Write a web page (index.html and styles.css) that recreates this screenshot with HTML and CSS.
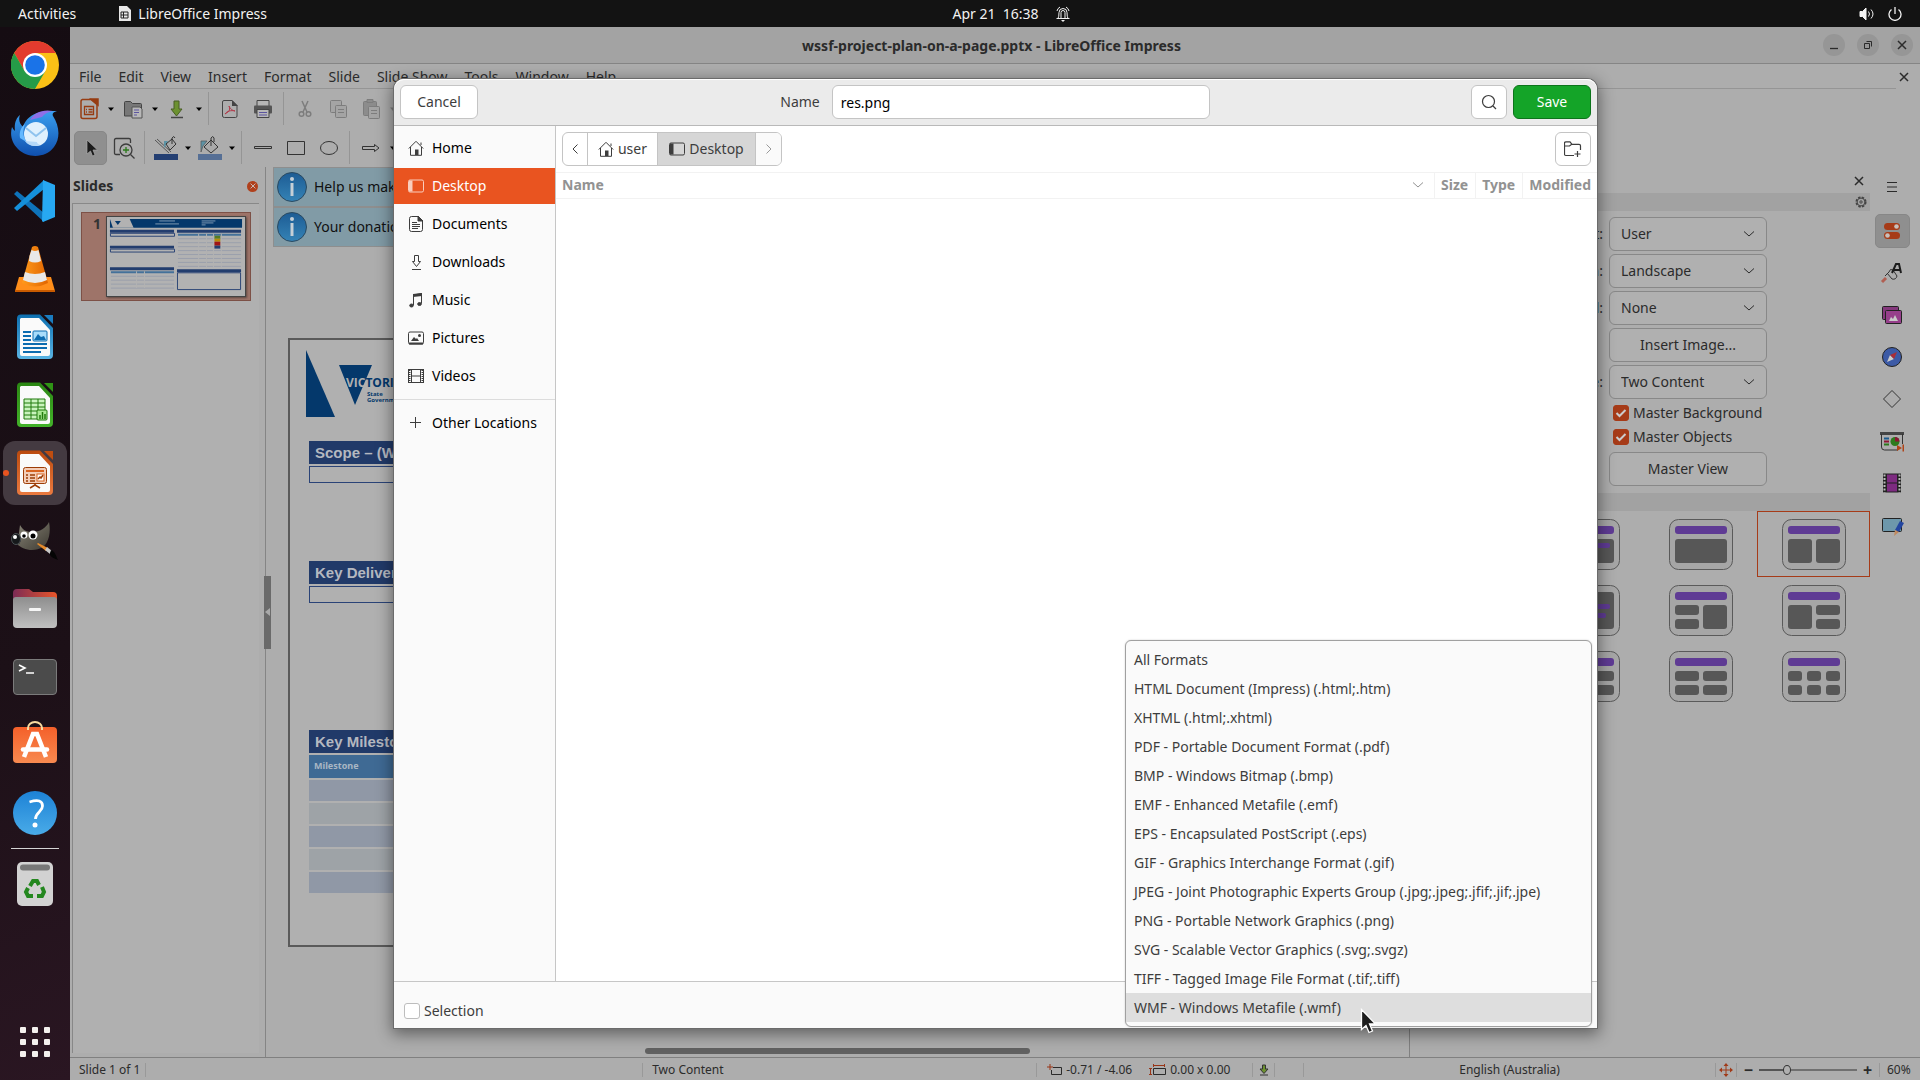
FILE: index.html
```html
<!DOCTYPE html>
<html lang="en">
<head>
<meta charset="utf-8">
<title>wssf-project-plan-on-a-page.pptx - LibreOffice Impress</title>
<link rel="stylesheet" href="styles.css">
</head>
<body>
<svg class="defs" aria-hidden="true">
  <defs>
    <linearGradient id="g-tb" x1="0" y1="0" x2="0" y2="1"><stop offset="0" stop-color="#3aa0f0"/><stop offset="1" stop-color="#0f4fae"/></linearGradient>
    <linearGradient id="g-cone" x1="0" y1="0" x2="1" y2="0"><stop offset="0" stop-color="#ff9a1c"/><stop offset="1" stop-color="#e06500"/></linearGradient>
    <linearGradient id="g-writer" x1="0" y1="0" x2="0" y2="1"><stop offset="0" stop-color="#0d6fb0"/><stop offset="1" stop-color="#5ab4e4"/></linearGradient>
    <linearGradient id="g-calc" x1="0" y1="0" x2="0" y2="1"><stop offset="0" stop-color="#2b8713"/><stop offset="1" stop-color="#43b32a"/></linearGradient>
    <linearGradient id="g-impress" x1="0" y1="0" x2="0" y2="1"><stop offset="0" stop-color="#bb4a0e"/><stop offset="1" stop-color="#ea7a40"/></linearGradient>
    <linearGradient id="g-files" x1="0" y1="0" x2="1" y2="0"><stop offset="0" stop-color="#7c2b55"/><stop offset="1" stop-color="#e9562a"/></linearGradient>
    <linearGradient id="g-grey" x1="0" y1="0" x2="0" y2="1"><stop offset="0" stop-color="#8e8e8e"/><stop offset="1" stop-color="#c0c0c0"/></linearGradient>
    <linearGradient id="g-help" x1="0" y1="0" x2="0" y2="1"><stop offset="0" stop-color="#1d82d6"/><stop offset="1" stop-color="#49abe8"/></linearGradient>
    <linearGradient id="g-info" x1="0" y1="0" x2="0" y2="1"><stop offset="0" stop-color="#1d5c94"/><stop offset="1" stop-color="#3583b6"/></linearGradient>
    <linearGradient id="g-bag" x1="0" y1="0" x2="0" y2="1"><stop offset="0" stop-color="#f4602a"/><stop offset="1" stop-color="#f88a50"/></linearGradient>
    <linearGradient id="g-gimp" x1="0" y1="0" x2="1" y2="1"><stop offset="0" stop-color="#8a8678"/><stop offset="1" stop-color="#3d3a32"/></linearGradient>
  </defs>
  <symbol id="home" viewBox="0 0 16 16"><path d="M.8 8.5 8 1.3l7.2 7.2M2.5 7v8.3h11V7M13 5V2.5" fill="none" stroke="currentColor"/><path d="M7 9.5h3.5V15H7z" fill="currentColor"/></symbol>
  <symbol id="desk" viewBox="0 0 16 16"><rect x=".5" y="2" width="15" height="12" rx="1.5" fill="none" stroke="currentColor"/><path d="M1 2.5h3.5v11H1z" fill="currentColor"/></symbol>
  <symbol id="caret" viewBox="0 0 8 8"><path d="M1 2.5h6L4 6z" fill="currentColor"/></symbol>
  <symbol id="close" viewBox="0 0 10 10"><path d="m1 1 8 8M9 1 1 9" stroke="currentColor" stroke-width="1.5"/></symbol>
  <symbol id="info" viewBox="0 0 30 30"><circle cx="15" cy="15" r="14.5" fill="url(#g-info)" stroke="#2b4a61"/><circle cx="15" cy="7" r="2" fill="#c5cfd6"/><path d="M13.5 11h3v13h-3z" fill="#c5cfd6"/></symbol>
</svg>

<header class="topbar">
  <div class="topbar-left"><span>Activities</span>
    <span class="app-name"><svg width="13" height="16" viewBox="0 0 13 16"><path d="M1 0h8l4 4v11H1z" fill="#e8e8e8"/><path d="M3 6h7v6H3zM3 9h7M5.5 6v6" fill="none" stroke="#222"/></svg>LibreOffice Impress</span></div>
  <div class="clock"><span>Apr 21&nbsp; 16:38</span><svg width="14" height="16" viewBox="0 0 14 16" fill="none" stroke="#f2f2f2"><path d="M.5 12.5h13M2 12.5q1-1.500 1-6a4 4 0 0 1 8 0q0 4.500 1 6M5 12V6.500a2 2 0 0 1 4 0V12M1 5A6 6 0 0 1 4 1M13 5A6 6 0 0 0 10 1"/><path d="M5 14h4l-2 2z" fill="#f2f2f2" stroke="none"/></svg></div>
  <div class="tray"><svg width="16" height="14" viewBox="0 0 16 14" fill="none" stroke="#f2f2f2"><path d="M1 4.5h2.500L7 1v12L3.500 9.500H1z" fill="#f2f2f2"/><path d="M9.500 4.500q2 2.500 0 5M12 2.500q4 4.500 0 9"/></svg><svg width="14" height="14" viewBox="0 0 14 14" fill="none" stroke="#f2f2f2" stroke-width="1.300"><path d="M3.500 2.500a6 6 0 1 0 7 0M7 0v7"/></svg></div>
</header>

<div class="desktop">
<nav class="dock" aria-label="Dock">
  <a href="#" class="dock-item" aria-label="Chrome"><svg viewBox="0 0 48 48"><circle cx="24" cy="24" r="24" fill="#fbc116"/><path d="M3.200 12A24 24 0 0 1 44.800 12H24L13.600 30z" fill="#e33b2e"/><path d="M3.200 12A24 24 0 0 0 24 48L34.400 30 24 34 13.600 30z" fill="#259b48"/><circle cx="24" cy="24" r="12" fill="#fff"/><circle cx="24" cy="24" r="9.800" fill="#1a73e8"/></svg></a>
  <a href="#" class="dock-item" aria-label="Thunderbird"><svg viewBox="0 0 48 48"><path d="M9 6c-2 5 0 9 3 12C15 8 24 1 46 2c-4 1-5 3-4 5 6 9 8 22 1 31-8 11-26 12-36 2C0 33-1 25 1 18c1 2 2 3 3 4C3 15 5 9 9 6z" fill="url(#g-tb)"/><path d="M19 11C23 4 31 0 42 2c-5 1-9 3-11 6z" fill="#8f6fe8"/><path d="M14 15c-3 8-2 14 3 19l-8-5c-1-6 1-11 5-14z" fill="#63b8ff"/><circle cx="25" cy="25" r="12" fill="#dff0fd"/><path d="m15 19 10 8 10-8" fill="none" stroke="#8fc3ee" stroke-width="2"/><path d="M14 32c3 5 10 6 15 4-3-1-3-3-3-3z" fill="#b4d8f8"/></svg></a>
  <a href="#" class="dock-item" aria-label="Visual Studio Code"><svg viewBox="0 0 48 48"><path d="m3 17 3-3 27 22v9z" fill="#0e73ba"/><path d="m3 31 3 3L33 12V3z" fill="#1590da"/><path d="m32 3 12 5v32l-12 5-1-1z" fill="#27a8f2"/></svg></a>
  <a href="#" class="dock-item" aria-label="VLC"><svg viewBox="0 0 48 48"><path d="M8 32h32l4 14H4z" fill="#ff8e1a"/><path d="M4 45h40v2H4z" fill="#c95b00"/><path d="M21 2q3-2 6 0l10 36q-13 7-26 0z" fill="url(#g-cone)"/><path d="m18.500 11 2-6q3.500 2 7 0l2.500 11q-6 3-12 0zM14 27q10 4 20 0l2 8q-12 6-24 0z" fill="#e8e8e8"/></svg></a>
  <a href="#" class="dock-item" aria-label="Writer"><svg viewBox="0 0 48 48"><path d="M10 1.500h19L42 15v27a4 4 0 0 1-4 4H10a4 4 0 0 1-4-4V5.500a4 4 0 0 1 4-4z" fill="url(#g-writer)"/><path d="M10 5h18l11 12v24q0 2-2 2H11q-2 0-2-2V6z" fill="#fafafa"/><path d="M33 2h9v9z" fill="#1a7cc0"/><path d="M12 19h8M12 23h8M12 27h8M12 31h24M12 35h24M12 39h18" stroke="#0d6cb0" stroke-width="2"/><rect x="22" y="18" width="14" height="10" rx="1" fill="#a8dcfa" stroke="#0d6cb0"/><path d="m23 27 4-6 3 3 3-1 2 4z" fill="#0d6cb0"/></svg></a>
  <a href="#" class="dock-item" aria-label="Calc"><svg viewBox="0 0 48 48"><path d="M10 1.500h19L42 15v27a4 4 0 0 1-4 4H10a4 4 0 0 1-4-4V5.500a4 4 0 0 1 4-4z" fill="url(#g-calc)"/><path d="M10 5h18l11 12v24q0 2-2 2H11q-2 0-2-2V6z" fill="#fafafa"/><path d="M33 2h9v9z" fill="#2f9415"/><path d="M13 18h21v20H13zM13 22h21M13 26h21M13 30h21M13 34h21M20 18v20M27 18v20" fill="#c9f3bd" stroke="#217a0c"/><rect x="26" y="29" width="10" height="10" rx="1" fill="#a9e892" stroke="#217a0c"/><path d="M29 38v-4M31.500 38v-7M34 38v-5" stroke="#217a0c" stroke-width="1.500"/></svg></a>
  <a href="#" class="dock-item active" aria-label="Impress"><svg viewBox="0 0 48 48"><path d="M10 1.500h19L42 15v27a4 4 0 0 1-4 4H10a4 4 0 0 1-4-4V5.500a4 4 0 0 1 4-4z" fill="url(#g-impress)"/><path d="M10 5h18l11 12v24q0 2-2 2H11q-2 0-2-2V6z" fill="#fafafa"/><path d="M33 2h9v9z" fill="#bf4d10"/><rect x="12.500" y="18.500" width="23" height="16" rx="2" fill="#f3cdb8" stroke="#9c3c06"/><path d="M15 22h18" stroke="#d8621f" stroke-width="2"/><path d="M15 26h2M15 29h2M15 32h2M19 26h5M19 29h5M19 32h5" stroke="#9c3c06" stroke-width="1.500"/><rect x="26" y="25" width="7" height="7" fill="#fff" stroke="#d8621f"/><path d="m27 30 2-2 1 1 2-3M24 35v1l-5 3M24 36l5 3" fill="none" stroke="#9c3c06" stroke-width="1.500"/></svg></a>
  <a href="#" class="dock-item" aria-label="GIMP"><svg viewBox="0 -3 48 48"><path d="M9 5c3 5 6 7 12 7 8 0 14-4 17-10 2 10 0 20-6 25-8 5-20 4-27-4 2-2 3-10 4-18z" fill="url(#g-gimp)"/><ellipse cx="5" cy="19" rx="5" ry="6" fill="#16191b"/><ellipse cx="5" cy="19" rx="4.500" ry="5.500" fill="none" stroke="#4a5054"/><circle cx="4" cy="17" r="2" fill="#fff"/><circle cx="13" cy="15" r="3.500" fill="#fff"/><circle cx="22" cy="15" r="4.500" fill="#fff"/><circle cx="13" cy="16" r="1.800"/><circle cx="22" cy="16" r="2.500"/><path d="m27 23 10 5-2 3-9-7z" fill="#e58a2b"/><path d="m36 27 5 4-2 3-5-4z" fill="#c8c8c8"/><path d="M40 30c4 1 5 6 7 10-5-2-9-4-8-7z" fill="#050505"/></svg></a>
  <a href="#" class="dock-item" aria-label="Files"><svg viewBox="0 2 48 48"><path d="M2 10q0-4 4-4h12l4 3h20q4 0 4 4v10H2z" fill="url(#g-files)"/><path d="M2 17q0-3 3-3h38q3 0 3 3v24q0 4-4 4H6q-4 0-4-4z" fill="url(#g-grey)"/><rect x="18" y="25" width="12" height="3" rx="1" fill="#f5f5f5"/></svg></a>
  <a href="#" class="dock-item" aria-label="Terminal"><svg viewBox="0 0 48 48"><rect x="2.500" y="6.500" width="43" height="35" rx="3.500" fill="#4b4b4b" stroke="#7b7b7b"/><path d="m8 12 6 3-6 3M15 20h8" fill="none" stroke="#fff" stroke-width="1.600"/></svg></a>
  <a href="#" class="dock-item" aria-label="Ubuntu Software"><svg viewBox="0 0 48 48"><rect x="2" y="6" width="44" height="36" rx="4" fill="url(#g-bag)"/><path d="M17 9V7a7 6 0 0 1 14 0v2" fill="none" stroke="#f9dba0" stroke-width="2"/><path d="m13 36 9-23h4l9 23" fill="none" stroke="#fff" stroke-width="4.500"/><path d="M12 28.500h24" stroke="#fff" stroke-width="4.500" stroke-linecap="round"/></svg></a>
  <a href="#" class="dock-item" aria-label="Help"><svg viewBox="0 0 48 48"><circle cx="24" cy="24" r="22" fill="url(#g-help)"/><path d="M18.500 13q13-4 13 4c0 6-7 6-7 13" fill="none" stroke="#fff" stroke-width="2.800"/><circle cx="24" cy="36" r="2.500" fill="#fff"/></svg></a>
  <span class="dock-rule"></span>
  <a href="#" class="dock-item" aria-label="Trash"><svg viewBox="0 0 48 48"><rect x="6" y="2" width="36" height="44" rx="5" fill="#d2d2d2"/><rect x="9" y="4.500" width="30" height="6" rx="3" fill="#777"/><g fill="none" stroke="#24871f" stroke-width="4"><path d="m19 26 3-5h4l2 4"/><path d="m31 27 2 5-2 4h-5"/><path d="M22 36h-5l-2-4 2-4"/></g></svg></a>
  <a href="#" class="dock-item apps" aria-label="Show Applications"><svg viewBox="0 0 48 48" fill="#f4f1ee"><rect x="9" y="9" width="6" height="6" rx="1"/><rect x="21" y="9" width="6" height="6" rx="1"/><rect x="33" y="9" width="6" height="6" rx="1"/><rect x="9" y="21" width="6" height="6" rx="1"/><rect x="21" y="21" width="6" height="6" rx="1"/><rect x="33" y="21" width="6" height="6" rx="1"/><rect x="9" y="33" width="6" height="6" rx="1"/><rect x="21" y="33" width="6" height="6" rx="1"/><rect x="33" y="33" width="6" height="6" rx="1"/></svg></a>
</nav>

<main class="window">
  <div class="titlebar"><span class="tb-side"></span><h1>wssf-project-plan-on-a-page.pptx - LibreOffice Impress</h1>
    <div class="tb-side controls">
      <button aria-label="Minimize"><svg width="10" height="10" viewBox="0 0 10 10"><path d="M1 8.500h8" stroke="currentColor" stroke-width="1.300"/></svg></button>
      <button aria-label="Restore"><svg width="10" height="10" viewBox="0 0 10 10"><path d="M1.500 3.500h5v5h-5zM3.500 1.500h5v5" fill="none" stroke="currentColor"/></svg></button>
      <button aria-label="Close"><svg width="10" height="10"><use href="#close"/></svg></button>
    </div></div>
  <div class="menubar"><nav><a href="#">File</a><a href="#">Edit</a><a href="#">View</a><a href="#">Insert</a><a href="#">Format</a><a href="#">Slide</a><a href="#">Slide Show</a><a href="#">Tools</a><a href="#">Window</a><a href="#">Help</a></nav><button class="bare" aria-label="Close document"><svg width="10" height="10"><use href="#close"/></svg></button></div>

  <div class="toolbar">
    <button class="tool" aria-label="New"><svg width="20" height="22" viewBox="0 0 20 22" fill="none" stroke="#973c12" stroke-width="1.500"><path d="M3 1.500h9l6 5v12q0 2-2 2H4q-2 0-2-2v-15q0-2 2-2z"/><path d="M12 1h7v6z" fill="#973c12"/><path d="M5.500 8.500h9v8h-9zM7 11.500h1M9.500 11.500h4M7 14h1M9.500 14h4" stroke-width="1.300"/></svg></button><button class="drop" aria-label="New options"><svg><use href="#caret"/></svg></button>
    <button class="tool" aria-label="Open"><svg width="20" height="20" viewBox="0 0 20 20"><path d="M1.500 3.500q0-1 1-1h5l2 2h8q1 0 1 1V17h-17z" fill="#777" stroke="#444"/><path d="M9 8h8l2 2v9H9z" fill="#b8b8b8" stroke="#555"/><path d="M11 11h5M11 13.500h5M11 16h3" stroke="#5c55a0"/></svg></button><button class="drop" aria-label="Open options"><svg><use href="#caret"/></svg></button>
    <button class="tool" aria-label="Save"><svg width="18" height="20" viewBox="0 0 18 20"><path d="M6 2h5v8h3l-5.500 7L3 10h3z" fill="#6c9130" stroke="#485f24"/><path d="M3 18.500h12" stroke="#444" stroke-width="1.500"/></svg></button><button class="drop" aria-label="Save options"><svg><use href="#caret"/></svg></button>
    <span class="sep"></span>
    <button class="tool" aria-label="Export as PDF"><svg width="18" height="20" viewBox="0 0 18 20" fill="none"><path d="M3 1.500h8l5 5V17q0 1.500-1.500 1.500h-11Q1.500 18.500 1.500 17V3Q1.500 1.500 3 1.500z" stroke="#444"/><path d="M11 1v6h6z" fill="#444"/><path d="M8 7c2 5-1 6-4 8 2-3 6-4 10-3-4-1-5-3-6-5" stroke="#b23a4a"/></svg></button>
    <button class="tool" aria-label="Print"><svg width="20" height="20" viewBox="0 0 20 20"><path d="M4 1.500h12V8H4z" fill="#b5b5b5" stroke="#444"/><rect x="1" y="6.500" width="18" height="8" rx="1" fill="#555"/><path d="M4 10.500h12v8H4z" fill="#b8b8b8" stroke="#444"/><path d="M6 13.500h8M6 16h8" stroke="#5c55a0"/></svg></button>
    <span class="sep"></span>
    <button class="tool" aria-label="Cut" disabled><svg width="16" height="20" viewBox="0 0 16 20" fill="none" stroke="#7d7d7d" stroke-width="1.500"><path d="m5 2 5 11M11 2 6 13"/><circle cx="4.500" cy="15" r="2.300"/><circle cx="11.500" cy="15" r="2.300"/></svg></button>
    <button class="tool" aria-label="Copy" disabled><svg width="18" height="20" viewBox="0 0 18 20" fill="#a4a4a4" stroke="#7d7d7d"><rect x="1.500" y="1.500" width="11" height="12" rx="1"/><rect x="6.500" y="6.500" width="11" height="12" rx="1"/><path d="M9 10.500h6M9 13.500h6"/></svg></button>
    <button class="tool" aria-label="Paste" disabled><svg width="18" height="20" viewBox="0 0 18 20" fill="#8c8c8c" stroke="#7d7d7d"><rect x="1.500" y="2.500" width="13" height="14" rx="1"/><path d="M5 .500h6v3H5z"/><rect x="6.500" y="7.500" width="11" height="12" rx="1" fill="#a4a4a4"/><path d="M9 11.500h6M9 14.500h6"/></svg></button><button class="drop" aria-label="Paste options" disabled><svg><use href="#caret"/></svg></button>
  </div>
  <div class="toolbar drawing">
    <button class="tool pressed" aria-label="Select"><svg width="20" height="22" viewBox="0 0 20 22"><path d="M6 3v14l3.500-3 2 5 2.500-1-2-5h4.500z" fill="#1b1b1b" stroke="#aaa" stroke-width=".7"/></svg></button>
    <button class="tool" aria-label="Zoom"><svg width="22" height="22" viewBox="0 0 22 22" fill="none" stroke="#3c3c3c" stroke-width="1.300"><path d="M7 17.500H3q-1.500 0-1.500-1.500V3q0-1.500 1.500-1.500h13q1.500 0 1.500 1.500v3"/><circle cx="13" cy="13" r="6"/><path d="m17.500 17.500 4 4"/><path d="M13 10v6M10 13h6" stroke="#2a7a1a"/></svg></button>
    <span class="sep"></span>
    <button class="tool" aria-label="Line color"><svg width="24" height="24" viewBox="0 0 24 24"><path d="M1 4 15 17M3 3l14 13" stroke="#555"/><path d="M10 12V5h4l-2 4z" fill="#5d93a5"/><path d="m12 8 6-5 4 5-6 6z" fill="#aaa" stroke="#333"/><path d="M18 8V2q2-3 3 0" fill="none" stroke="#333"/><path d="M0 18h24v6H0z" fill="#243f72"/></svg></button><button class="drop" aria-label="Line color options"><svg><use href="#caret"/></svg></button>
    <button class="tool" aria-label="Fill color"><svg width="24" height="24" viewBox="0 0 24 24"><path d="M3 16V5h6l-4 5z" fill="#5d93a5" stroke="#555" stroke-width=".7"/><path d="m6 11 7-7 7 7-7 6z" fill="#aaa" stroke="#333"/><path d="M13 10V2q2-3 3 0v4" fill="none" stroke="#333"/><path d="M0 18h24v6H0z" fill="#566f95"/></svg></button><button class="drop" aria-label="Fill color options"><svg><use href="#caret"/></svg></button>
    <span class="sep"></span>
    <button class="tool" aria-label="Line"><svg width="18" height="18" viewBox="0 0 18 18"><path d="M.5 7.500h17v2H.5z" fill="#aaa" stroke="#333"/></svg></button>
    <button class="tool" aria-label="Rectangle"><svg width="18" height="18" viewBox="0 0 18 18"><path d="M.5 2.500h17v13H.5z" fill="none" stroke="#333"/></svg></button>
    <button class="tool" aria-label="Ellipse"><svg width="18" height="18" viewBox="0 0 18 18"><ellipse cx="9" cy="9" rx="8.500" ry="6.500" fill="none" stroke="#333"/></svg></button>
    <span class="sep"></span>
    <button class="tool" aria-label="Arrows"><svg width="18" height="18" viewBox="0 0 18 18"><path d="M.5 7.500h12v-2L17 9l-4.500 3.500v-2H.5z" fill="none" stroke="#333"/></svg></button><button class="drop" aria-label="Arrow options"><svg><use href="#caret"/></svg></button>
  </div>

  <div class="workspace">
    <section class="slides">
      <header><h2>Slides</h2><button class="round-close" aria-label="Close slides pane"><svg width="6" height="6"><use href="#close"/></svg></button></header>
      <div class="slide-list">
        <div class="slide-thumb"><span>1</span>
          <svg viewBox="0 0 140 80" preserveAspectRatio="none" aria-label="Slide 1 preview"><path fill="#b2b2b2" d="M0 0h140v80H0z"/><path d="M3 2h134v9H3z" fill="#04386b"/><path d="M3 2h20l4 9H6z" fill="#b2b2b2"/><path d="M8 4h6l-3 4z" fill="#04386b"/><path d="M3 13h65v3H3zM3 29h65v3H3zM3 51h65v3H3zM71 13h65v3H71zM71 53h65v3H71z" fill="#223d6e"/><path d="M3.500 16.500h65v3h-65zM3.500 32.500h65v3h-65zM71.500 56.500h64v17h-64z" fill="none" stroke="#2c4576"/><path d="M4 55h64v2H4zM72 17h64v2H72z" fill="#44719a"/><path d="M4 60h64M4 64h64M4 68h64M4 72h64M72 22h64M72 26h64M72 30h64M72 34h64M72 38h64M72 42h64M72 46h64M72 50h64" stroke="#9aa0ac"/><path d="M109 19h6v3h-6z" fill="#557d24"/><path d="M109 22h6v3h-6z" fill="#b78d08"/><path d="M109 25h6v4h-6z" fill="#a11515"/><path d="M109 29h6v3h-6z" fill="#223d6e"/><path d="M30 55v17M38 55v17M93 17v34M101 17v34M108 17v34M116 17v34" stroke="#b2b2b2"/><path d="M53 4h16M49 7h24M96 4h14M96 6h12M96 8h4" stroke="#7d98b2"/></svg>
        </div>
      </div>
    </section>
    <div class="splitter"><button aria-label="Collapse slides pane"><svg width="5" height="8" viewBox="0 0 5 8"><path d="M5 0v8L0 4z" fill="#aaa"/></svg></button></div>
    <section class="editor">
      <div class="infobar"><svg width="30" height="30"><use href="#info"/></svg>Help us mak</div>
      <div class="infobar"><svg width="30" height="30"><use href="#info"/></svg>Your donatio</div>
      <article class="slide">
        <svg class="logo" width="140" height="68" viewBox="0 0 140 68"><path d="M0 0v67h29z" fill="#04386b"/><path d="M33 15h33L49 55z" fill="#04386b"/><text x="40" y="37" class="logo-name"><tspan fill="#b0b0b0">VIC</tspan><tspan>TORIA</tspan></text><text x="61" y="46" class="logo-sub">State</text><text x="61" y="52" class="logo-sub">Government</text></svg>
        <div class="block scope"><h3>Scope – (What is in scope)</h3><div class="box"></div></div>
        <div class="block deliver"><h3>Key Deliverables</h3><div class="box"></div></div>
        <div class="block"><h3>Key Milestones</h3>
          <table><thead><tr><th>Milestone</th></tr></thead><tbody><tr><td></td></tr><tr><td></td></tr><tr><td></td></tr><tr><td></td></tr><tr><td></td></tr></tbody></table></div>
      </article>
      <div class="hscroll"><span></span></div>
    </section>
    <aside class="deck">
      <div class="deck-title"><button class="bare" aria-label="Close sidebar deck"><svg width="10" height="10"><use href="#close"/></svg></button></div>
      <div class="strip"><svg width="12" height="12" viewBox="0 0 12 12" fill="none" stroke="#444"><circle cx="6" cy="6" r="4.800" stroke-width="1.500" stroke-dasharray="2.500 1.300"/><circle cx="6" cy="6" r="3.900"/><circle cx="6" cy="6" r="1.200"/></svg></div>
      <form class="props">
        <label for="f1">Format:</label><select id="f1"><option>User</option></select>
        <label for="f2">Orientation:</label><select id="f2"><option>Landscape</option></select>
        <label for="f3">Background:</label><select id="f3"><option>None</option></select>
        <button type="button">Insert Image...</button>
        <label for="f4">Master Slide:</label><select id="f4"><option>Two Content</option></select>
        <div class="checks"><label><input type="checkbox" checked>Master Background</label><label><input type="checkbox" checked>Master Objects</label></div>
        <button type="button">Master View</button>
      </form>
      <div class="strip"></div>
      <div class="layouts">
        <i><svg><rect class="f" x=".5" y=".5" width="63" height="50" rx="9"/></svg></i>
        <i><svg><rect class="f" x=".5" y=".5" width="63" height="50" rx="9"/><rect class="p" x="6" y="7" width="52" height="8" rx="3"/><rect class="g" x="6" y="20" width="52" height="24" rx="3"/><rect class="p" x="10" y="24" width="44" height="5" rx="2"/></svg></i>
        <i><svg><rect class="f" x=".5" y=".5" width="63" height="50" rx="9"/><rect class="p" x="6" y="7" width="52" height="8" rx="3"/><rect class="g" x="6" y="20" width="52" height="24" rx="3"/></svg></i>
        <i class="sel"><svg><rect class="f" x=".5" y=".5" width="63" height="50" rx="9"/><rect class="p" x="6" y="7" width="52" height="8" rx="3"/><rect class="g" x="6" y="20" width="24" height="24" rx="3"/><rect class="g" x="34" y="20" width="24" height="24" rx="3"/></svg></i>
        <i><svg><rect class="f" x=".5" y=".5" width="63" height="50" rx="9"/><rect class="p" x="6" y="7" width="52" height="8" rx="3"/></svg></i>
        <i><svg><rect class="f" x=".5" y=".5" width="63" height="50" rx="9"/><rect class="g" x="6" y="7" width="52" height="37" rx="3"/><rect class="p" x="10" y="19" width="44" height="5" rx="2"/><rect class="p" x="14" y="28" width="36" height="5" rx="2"/></svg></i>
        <i><svg><rect class="f" x=".5" y=".5" width="63" height="50" rx="9"/><rect class="p" x="6" y="7" width="52" height="8" rx="3"/><rect class="g" x="6" y="20" width="24" height="10" rx="3"/><rect class="g" x="6" y="34" width="24" height="10" rx="3"/><rect class="g" x="34" y="20" width="24" height="24" rx="3"/></svg></i>
        <i><svg><rect class="f" x=".5" y=".5" width="63" height="50" rx="9"/><rect class="p" x="6" y="7" width="52" height="8" rx="3"/><rect class="g" x="6" y="20" width="24" height="24" rx="3"/><rect class="g" x="34" y="20" width="24" height="10" rx="3"/><rect class="g" x="34" y="34" width="24" height="10" rx="3"/></svg></i>
        <i><svg><rect class="f" x=".5" y=".5" width="63" height="50" rx="9"/><rect class="p" x="6" y="7" width="52" height="8" rx="3"/></svg></i>
        <i><svg><rect class="f" x=".5" y=".5" width="63" height="50" rx="9"/><rect class="p" x="6" y="7" width="52" height="8" rx="3"/><rect class="g" x="6" y="20" width="52" height="10" rx="3"/><rect class="g" x="6" y="34" width="52" height="10" rx="3"/></svg></i>
        <i><svg><rect class="f" x=".5" y=".5" width="63" height="50" rx="9"/><rect class="p" x="6" y="7" width="52" height="8" rx="3"/><rect class="g" x="6" y="20" width="24" height="10" rx="3"/><rect class="g" x="6" y="34" width="24" height="10" rx="3"/><rect class="g" x="34" y="20" width="24" height="10" rx="3"/><rect class="g" x="34" y="34" width="24" height="10" rx="3"/></svg></i>
        <i><svg><rect class="f" x=".5" y=".5" width="63" height="50" rx="9"/><rect class="p" x="6" y="7" width="52" height="8" rx="3"/><rect class="g" x="6" y="20" width="14" height="10" rx="3"/><rect class="g" x="25" y="20" width="14" height="10" rx="3"/><rect class="g" x="44" y="20" width="14" height="10" rx="3"/><rect class="g" x="6" y="34" width="14" height="10" rx="3"/><rect class="g" x="25" y="34" width="14" height="10" rx="3"/><rect class="g" x="44" y="34" width="14" height="10" rx="3"/></svg></i>
      </div>
    </aside>
    <nav class="tabs" aria-label="Sidebar">
      <button class="menu" aria-label="Sidebar settings"><svg width="10" height="10" viewBox="0 0 10 10"><path d="M0 .500h10M0 5h10M0 9.500h10" stroke="#2a2a2a"/></svg></button>
      <button class="on" aria-label="Properties"><svg viewBox="0 0 24 24"><rect x="4" y="4" width="16" height="7" rx="3.500" fill="#a63b18"/><circle cx="16.500" cy="7.500" r="2.300" fill="#c8c0bc"/><rect x="4" y="13" width="16" height="7" rx="3.500" fill="#a63b18"/><circle cx="7.500" cy="16.500" r="2.300" fill="#c8c0bc"/></svg></button>
      <button aria-label="Styles"><svg viewBox="0 0 24 24"><path d="m2 21 4-4" stroke="#b05f52" stroke-width="3"/><path d="m5 15 4-4q1-4 4-2l4 6q-1 4-5 3l-5-6" fill="none" stroke="#333"/><path d="m12 12 4-9h3l2 9M14 9h6" fill="none" stroke="#1c1c1c" stroke-width="2"/></svg></button>
      <button aria-label="Gallery"><svg viewBox="0 0 24 24" stroke="#222"><rect x="2.500" y="3.500" width="16" height="13" rx="1" fill="#84397c"/><rect x="5.500" y="7.500" width="16" height="13" rx="1" fill="#963f8b"/><path d="m9 18 2-4 2 2 2-4 3 6z" fill="#c9c9c9" stroke="none"/></svg></button>
      <button aria-label="Navigator"><svg viewBox="0 0 24 24"><circle cx="12" cy="12" r="9.500" fill="#3c5aa6" stroke="#222"/><path d="m7 17 3-7 4 4z" fill="#ccc"/><path d="m17 7-3 7-4-4z" fill="#a92e38"/></svg></button>
      <button aria-label="Shapes"><svg viewBox="0 0 24 24"><path d="m12 3.500 8.500 8.500-8.500 8.500L3.500 12z" fill="none" stroke="#333"/></svg></button>
      <button aria-label="Slide transition"><svg viewBox="0 0 24 24"><path d="M0 3h24v3H0z" fill="#444"/><path d="M1.500 5v13q0 3 3 3H18M22.500 5v10" fill="none" stroke="#333"/><path d="M4 9.500h5" stroke="#1b5a8e" stroke-width="2"/><path d="M4 12.500h5" stroke="#8e1535" stroke-width="2"/><path d="M4 15.500h5" stroke="#2d7a1e" stroke-width="2"/><circle cx="15" cy="12.500" r="4.500" fill="#2d7a1e"/><path d="M15 8a4.500 4.500 0 0 1 4.500 4.500H15z" fill="#8e1535"/><path d="m17 16 5 3-5 3zM22.500 15.500h1.500v7h-1.500z" fill="#b04419"/></svg></button>
      <button aria-label="Animation"><svg viewBox="0 0 24 24"><path d="M3 2.500h18v19H3z" fill="#222"/><path d="M7 3.500h10v8H7zM7 12.500h10v8H7z" fill="#7d2b80"/><path d="M4.500 3.500v18M19.500 3.500v18" stroke="#bbb" stroke-width="2" stroke-dasharray="2 1.500"/></svg></button>
      <button aria-label="Master slides"><svg viewBox="0 0 24 24"><rect x="2.500" y="5.500" width="19" height="13" rx="1" fill="#6d97ab" stroke="#222"/><path d="m15 17 5-9 4 2-5 9z" fill="#2345a0"/><path d="m15 17 4 2-5 4z" fill="#c08a60"/></svg></button>
    </nav>
  </div>

  <footer class="status">
    <span class="s-page">Slide 1 of 1</span><span class="s-info"></span><span class="s-layout">Two Content</span>
    <span class="s-pos"><svg width="16" height="12" viewBox="0 0 16 12" fill="none"><path d="M6 3.500h8.500v7h-10V6" stroke="#2a2a2a"/><path d="M3 0v6M0 3h6" stroke="#993517"/></svg><b>-0.71 / -4.06</b><svg width="18" height="12" viewBox="0 0 18 12" fill="none"><path d="M4.500 4.500h12v6h-12z" stroke="#2a2a2a"/><path d="M4 1.500h12M4.500 0v3M15.500 0v3M1.500 4v7M0 4.500h3M0 10.500h3" stroke="#993517"/></svg><b>0.00 x 0.00</b></span>
    <span class="s-save"><svg width="10" height="12" viewBox="0 0 10 12"><path d="M3.500 1h3v4H9L5 9.500 1 5h2.500z" fill="#6c9130" stroke="#333"/><path d="M1 11h8" stroke="#333"/></svg></span><span class="s-sign"></span>
    <span class="s-lang">English (Australia)</span>
    <span class="s-fit"><svg width="14" height="14" viewBox="0 0 14 14" fill="#a03a18"><path d="m7 0 2.500 3h-5zM7 14l2.500-3h-5zM0 7l3-2.500v5zM14 7l-3-2.500v5z"/><path d="M7 2v10M2 7h10" stroke="#a03a18"/></svg></span>
    <span class="s-zoom"><button aria-label="Zoom out">−</button><input type="range" aria-label="Zoom" value="27"><button aria-label="Zoom in">+</button></span>
    <span class="s-pct">60%</span>
  </footer>

  <div class="overlay">
    <div class="dialog" role="dialog" aria-label="Export">
      <header class="dlg-head">
        <button class="btn wide">Cancel</button>
        <div class="name"><label for="fname">Name</label><input id="fname" type="text" value="res.png"></div>
        <button class="btn icon" aria-label="Search"><svg width="16" height="16" viewBox="0 0 16 16" fill="none" stroke="currentColor" stroke-width="1.200"><circle cx="7.500" cy="7.500" r="6"/><path d="m12 12 3 3"/></svg></button>
        <button class="btn wide save">Save</button>
      </header>
      <div class="dlg-body">
        <nav class="places">
          <a href="#"><svg><use href="#home"/></svg>Home</a>
          <a href="#" class="current"><svg><use href="#desk"/></svg>Desktop</a>
          <a href="#"><svg viewBox="0 0 16 16" fill="none" stroke="currentColor"><path d="M3.500.5h7l4 4v9q0 2-2 2h-9q-2 0-2-2v-11q0-2 2-2z"/><path d="M10 0v5h5z" fill="currentColor"/><path d="M4 6.500h5M4 8.500h8M4 10.500h8M4 12.500h6"/></svg>Documents</a>
          <a href="#"><svg viewBox="0 0 16 16" fill="none" stroke="currentColor"><path d="M6.500 1.500h4v6h2l-4 5-4-5h2zM4 15.500h9"/></svg>Downloads</a>
          <a href="#"><svg viewBox="0 0 16 16" fill="none" stroke="currentColor"><path d="M5.500 13V3l8-1.500v10"/><path d="M5 2l9-1v3L5 5z" fill="currentColor" stroke="none"/><ellipse cx="3.500" cy="13.500" rx="1.800" ry="1.500" fill="currentColor"/><ellipse cx="11.500" cy="12" rx="1.800" ry="1.500" fill="currentColor"/></svg>Music</a>
          <a href="#"><svg viewBox="0 0 16 16" fill="none" stroke="currentColor"><rect x=".5" y="2" width="15" height="12" rx="1.500"/><path d="M1 13.500h14" stroke-width="2"/><path d="m3 11 3-4 2 2 1-1 2 3z" fill="currentColor" stroke="none"/><circle cx="11.500" cy="5.500" r="1.500" fill="currentColor" stroke="none"/></svg>Pictures</a>
          <a href="#"><svg viewBox="0 0 16 16" fill="none" stroke="currentColor"><path d="M3.500 1.500h9v13h-9zM3.500 8h9"/><path d="M1.500 2v12.500M14.500 2v12.500" stroke-width="2" stroke-dasharray="1 1"/><path d="M1 1.500h14M1 14.500h14M.500 1v14M15.500 1v14"/></svg>Videos</a>
          <hr>
          <a href="#"><svg viewBox="0 0 16 16" stroke="currentColor"><path d="M7.500 2v11M2 7.500h11"/></svg>Other Locations</a>
        </nav>
        <section class="files">
          <div class="path">
            <div class="crumbs"><button aria-label="Back"><svg width="8" height="12" viewBox="0 0 8 12" fill="none" stroke="currentColor"><path d="M6.500 1.500 2 6l4.500 4.500"/></svg></button><button class="c-user"><svg width="16" height="16"><use href="#home"/></svg>user</button><button class="c-desk"><svg width="16" height="16"><use href="#desk"/></svg>Desktop</button><button class="fwd" aria-label="Forward"><svg width="8" height="12" viewBox="0 0 8 12" fill="none" stroke="currentColor"><path d="M1.500 1.500 6 6l-4.500 4.500"/></svg></button></div>
            <button class="btn icon" aria-label="Create Folder"><svg width="18" height="16" viewBox="0 0 18 16" fill="none" stroke="currentColor" stroke-width="1.200"><path d="M10 14.500H2q-1.500 0-1.500-1.500V2Q.5.8 2 .8h4l2 2.500h7q1.500 0 1.500 1.500V9M.5 5h5l2.500-2M13.500 10v6M10.500 13h6"/></svg></button>
          </div>
          <table class="listing"><thead><tr><th class="n"><span>Name<svg width="12" height="8" viewBox="0 0 12 8" fill="none" stroke="currentColor"><path d="m1 1.500 5 4.500 5-4.500"/></svg></span></th><th>Size</th><th>Type</th><th class="m">Modified</th></tr></thead></table>
        </section>
      </div>
      <footer class="dlg-foot"><label><input type="checkbox">Selection</label>
        <ul class="formats" role="listbox" aria-label="File format">
          <li role="option">All Formats</li><li role="option">HTML Document (Impress) (.html;.htm)</li><li role="option">XHTML (.html;.xhtml)</li><li role="option">PDF - Portable Document Format (.pdf)</li><li role="option">BMP - Windows Bitmap (.bmp)</li><li role="option">EMF - Enhanced Metafile (.emf)</li><li role="option">EPS - Encapsulated PostScript (.eps)</li><li role="option">GIF - Graphics Interchange Format (.gif)</li><li role="option">JPEG - Joint Photographic Experts Group (.jpg;.jpeg;.jfif;.jif;.jpe)</li><li role="option">PNG - Portable Network Graphics (.png)</li><li role="option">SVG - Scalable Vector Graphics (.svg;.svgz)</li><li role="option">TIFF - Tagged Image File Format (.tif;.tiff)</li><li role="option" class="hover">WMF - Windows Metafile (.wmf)</li>
        </ul>
        <svg class="pointer" width="18" height="26" viewBox="0 0 18 26"><path d="M1.500 1.500v20l4.500-4 3 7 3.500-1.500-3-7h6z" fill="#1e1e1e" stroke="#fff" stroke-width="1.300"/></svg>
      </footer>
    </div>
  </div>
</main>
</div>
</body>
</html>
```
FILE: styles.css
```css
* { box-sizing: border-box; }
html, body { height: 100%; margin: 0; }
body { display: flex; flex-direction: column; overflow: hidden; font: 14px/20px "Noto Sans", "Open Sans", sans-serif; color: #2b2b2b; background: #adadad; }
button, input, select { font: inherit; color: inherit; }
button { padding: 0; border: 0; background: none; }
a { color: inherit; text-decoration: none; }
svg { display: block; flex: none; }
h1, h2, h3, ul { margin: 0; padding: 0; font-size: inherit; line-height: inherit; }
.defs { position: absolute; width: 0; height: 0; }

.topbar { display: flex; justify-content: space-between; height: 27px; flex: none; background: #131313; color: #f2f2f2; align-items: center; }
.topbar-left, .tray { flex: 1; display: flex; align-items: center; }
.topbar-left { gap: 42px; padding-left: 18px; }
.app-name { display: flex; align-items: center; gap: 7px; }
.clock { display: flex; gap: 17px; align-items: center; padding-left: 102px; }
.tray { justify-content: flex-end; gap: 13px; padding-right: 18px; }

.desktop { flex: 1; display: flex; min-height: 0; }
.dock { width: 70px; flex: none; display: flex; flex-direction: column; align-items: center; gap: 4px; padding: 6px 0; background: linear-gradient(160deg, #150c12 0%, #1c1017 60%, #2a1622 100%); }
.dock-item { width: 64px; height: 64px; display: grid; place-items: center; border-radius: 12px; position: relative; flex: none; }
.dock-item svg { width: 48px; height: 48px; }
.dock-item.active { background: #443a41; }
.dock-item.active::before { content: ""; position: absolute; left: 0; width: 6px; height: 6px; border-radius: 50%; background: #e95420; }
.dock-rule { width: 48px; height: 1px; background: #d5d5d5; margin: -1px 0; }
.apps { margin-top: auto; }

.window { flex: 1; min-width: 0; display: flex; flex-direction: column; position: relative; background: #adadad; }
.titlebar { display: flex; align-items: center; height: 37px; flex: none; background: #a3a3a3; border-bottom: 1px solid #858585; }
.titlebar h1 { white-space: nowrap; font-weight: 700; padding-top: 2px; }
.tb-side { flex: 1; }
.controls { display: flex; justify-content: flex-end; gap: 12px; padding-right: 7px; }
.controls button { width: 22px; height: 22px; border-radius: 50%; background: #969696; display: grid; place-items: center; }
.menubar { display: flex; justify-content: space-between; height: 25px; flex: none; padding-right: 11px; }
.menubar nav { flex: 1; display: flex; gap: 17px; padding: 2px 0 0 9px; margin-right: 3px; border-bottom: 1px solid #959595; align-items: center; }
.bare { display: grid; place-items: center; }
.toolbar { display: flex; align-items: center; height: 39px; flex: none; padding-left: 2px; }
.toolbar.drawing { padding-left: 4px; }
.tool { width: 33px; height: 34px; display: grid; place-items: center; border-radius: 5px; }
.tool.pressed { background: #8f8f8f; border: 1px solid #878787; }
.drop { width: 11px; display: grid; place-items: center; color: #000; }
.drop svg { width: 8px; height: 8px; }
.drop:disabled { color: #7d7d7d; }
.sep { width: 9px; height: 33px; background: linear-gradient(#959595, #959595) center / 1px 100% no-repeat; }

.workspace { flex: 1; display: flex; min-height: 0; border-bottom: 1px solid #808080; }
.slides { width: 194px; flex: none; display: flex; flex-direction: column; }
.slides header { display: flex; justify-content: space-between; align-items: center; height: 36px; padding: 2px 6px 0 3px; }
.slides h2 { font-weight: 700; }
.round-close { width: 11px; height: 11px; border-radius: 50%; background: #b0401c; color: #c9c9c9; display: grid; place-items: center; }
.slide-list { flex: 1; margin: 0 5px 4px 2px; border: solid #888; border-width: 1px 0 0 1px; background: #b0b0b0; padding: 8px; }
.slide-thumb { display: flex; width: 170px; height: 89px; padding: 3px 4px; gap: 5px; background: #9e7469; border: 1px solid #7d5147; font-weight: 700; }
.slide-thumb span { width: 20px; text-align: right; color: #333; line-height: 16px; }
.slide-thumb svg { width: 140px; height: 81px; border: 1px solid #444; box-shadow: 1px 1px 2px #5a4540; }
.splitter { width: 9px; flex: none; display: flex; align-items: center; background: linear-gradient(#858585, #858585) 1px 0 / 1px 100% no-repeat; }
.splitter button { width: 7px; height: 73px; background: #6a6a6a; display: grid; place-items: center; }
.editor { flex: 1; min-width: 0; display: flex; flex-direction: column; }
.infobar { display: flex; align-items: center; gap: 7px; height: 40px; flex: none; padding-left: 3px; background: #819ba6; border: 1px solid #8e8e8e; color: #101010; }
.slide { flex: 1; min-height: 0; margin: 91px 60px 98px 15px; padding: 10px 16px; border: 2px solid #5a5a5a; background: #b0b0b0; }
.logo text { fill: #04386b; font: 700 12px "Open Sans", sans-serif; }
.logo .logo-sub { font-size: 6px; }
.block { padding-left: 3px; font-family: "Liberation Sans", sans-serif; }
.scope { margin-top: 23px; height: 120px; }
.deliver { height: 169px; }
.block h3 { height: 23px; padding-left: 6px; font: 700 15px/24px "Liberation Sans", sans-serif; background: #213a69; color: #b4b8c0; margin-bottom: 2px; }
.box { height: 17px; border: 1px solid #2a4377; }
.block table { width: 100%; border-spacing: 0; border-collapse: collapse; }
.block th { height: 24px; padding: 0 0 2px 5px; text-align: left; font: 700 9px/12px "Noto Sans", sans-serif; color: #a9b7c4; background: #3f6a94; border-bottom: 2px solid #b0b0b0; }
.block td { height: 23px; padding: 0; background: #9098a6; border-bottom: 2px solid #b0b0b0; }
.block tr:nth-child(even) td { background: #9ea3a7; }
.hscroll { height: 12px; flex: none; display: flex; align-items: center; padding-left: 372px; }
.hscroll span { width: 385px; height: 6px; border-radius: 3px; background: #616161; }

.deck { width: 461px; flex: none; border-left: 1px solid #808080; }
.deck-title { height: 26px; display: flex; justify-content: flex-end; padding: 2px 6px 0; }
.strip { height: 18px; display: flex; justify-content: flex-end; align-items: center; padding-right: 3px; background: #a2a2a2; }
.props { display: grid; grid-template-columns: 1fr 158px; gap: 3px 6px; padding: 6px 103px 7px 0; }
.props > label { text-align: right; align-self: center; }
.props select, .props button { grid-column: 2; height: 34px; border: 1px solid #888; border-radius: 6px; background: #b0b0b0; }
.props select { appearance: none; padding: 0 11px; background: #b0b0b0 url("data:image/svg+xml,%3Csvg xmlns='http://www.w3.org/2000/svg' width='12' height='8' fill='none' stroke='%232b2b2b'%3E%3Cpath d='m1 1.500 5 4.500 5-4.500'/%3E%3C/svg%3E") right 11px center no-repeat; }
.checks { grid-column: 2; margin-top: -1px; }
.checks label { display: flex; align-items: center; gap: 4px; height: 24px; padding-left: 4px; white-space: nowrap; }
input[type="checkbox"] { appearance: none; width: 16px; height: 16px; margin: 0; flex: none; border: 1px solid #bdbdbd; border-radius: 3px; background: #fff; }
.checks input:checked { border-color: #a63b18; background: #a63b18 url("data:image/svg+xml,%3Csvg xmlns='http://www.w3.org/2000/svg' width='14' height='14' fill='none' stroke='%23ccc' stroke-width='2'%3E%3Cpath d='m2.500 7 3 3 6-6'/%3E%3C/svg%3E") center no-repeat; }
.layouts { display: grid; grid-template-columns: repeat(4, 1fr); grid-auto-rows: 66px; padding-left: 8px; }
.layouts i { display: grid; place-items: center; }
.layouts .sel { border: 1px solid #a63b18; }
.layouts svg { width: 64px; height: 51px; }
.f { fill: #a6a6a6; stroke: #5a5a5a; }
.p { fill: #5f3b94; }
.g { fill: #575757; }
.tabs { width: 50px; flex: none; display: flex; flex-direction: column; align-items: center; gap: 8px; padding-right: 6px; }
.tabs button { width: 35px; height: 34px; flex: none; display: grid; place-items: center; border-radius: 5px; }
.tabs button svg { width: 24px; height: 24px; }
.tabs .menu { height: 39px; }
.tabs .menu svg { width: 10px; height: 10px; }
.tabs .on { background: #8f8f8f; border: 1px solid #878787; }

.status { display: flex; align-items: center; height: 22px; flex: none; padding-top: 2px; font-size: 12px; }
.status > span { display: flex; align-items: center; height: 14px; white-space: nowrap; border-right: 1px solid #999; }
.status b { font-weight: 400; }
.status .s-page { width: 76px; padding-left: 9px; }
.status .s-info { flex: 500 1 0; }
.status .s-layout { flex: 387 1 0; padding-left: 9px; }
.status .s-pos { width: 215px; gap: 3px; padding-left: 10px; border: 0; }
.s-pos b:first-of-type { width: 80px; }
.status .s-save { width: 23px; justify-content: center; border-left: 1px solid #999; }
.status .s-sign { width: 29px; }
.status .s-lang { flex: 414 1 0; justify-content: center; }
.status .s-fit { width: 21px; justify-content: center; }
.status .s-zoom { width: 143px; justify-content: center; gap: 5px; }
.s-zoom button { font-weight: 700; font-size: 16px; line-height: 14px; width: 11px; }
.s-zoom input { appearance: none; width: 98px; height: 2px; margin: 0; background: linear-gradient(90deg, #555 28%, #707070 28%); }
.s-zoom input::-webkit-slider-thumb { appearance: none; width: 8px; height: 10px; border: 1px solid #333; border-radius: 50%; background: #b0b0b0; }
.status .s-pct { width: 40px; padding-left: 7px; border: 0; }

.overlay { position: absolute; inset: 0; padding: 52px 323px 52px 324px; display: flex; }
.dialog { flex: 1; display: flex; flex-direction: column; background: #fafafa; border-radius: 10px 10px 0 0; box-shadow: 0 0 0 1px #6b6b6b, 0 4px 16px 2px rgba(0, 0, 0, .45); color: #3d3d3d; }
.dlg-head { display: flex; align-items: center; gap: 6px; height: 47px; flex: none; padding: 0 6px; border-radius: 10px 10px 0 0; background: #ebebeb; border-bottom: 1px solid #b9b9b9; box-shadow: inset 0 1px #fff; }
.btn { height: 34px; border: 1px solid #c4c4c4; border-radius: 6px; background: #fff; display: grid; place-items: center; }
.btn.wide { width: 78px; }
.btn.icon { width: 36px; }
.btn.save { color: #fff; background: #14a428; border-color: #0c741b; }
.name { flex: 1; display: flex; justify-content: center; align-items: center; gap: 12px; padding-left: 41px; }
.name input { width: 378px; height: 34px; padding: 0 8px; border: 1px solid #c4c4c4; border-radius: 6px; background: #fff; color: #000; }
.dlg-body { flex: 1; display: flex; min-height: 0; }
.places { width: 162px; flex: none; display: flex; flex-direction: column; gap: 2px; padding-top: 4px; border-right: 1px solid #c6c6c6; color: #000; }
.places a { display: flex; align-items: center; gap: 8px; height: 36px; padding-left: 14px; white-space: nowrap; }
.places svg { width: 16px; height: 16px; color: #3d3d3d; }
.places .current { background: #e95420; color: #fff; }
.places .current svg { color: #f9cdbd; }
.places hr { width: 100%; margin: 3px 0; border: 0; border-top: 1px solid #dcdcdc; }
.files { flex: 1; background: #fff; }
.path { display: flex; justify-content: space-between; align-items: center; height: 46px; padding: 0 6px; }
.crumbs { display: flex; height: 34px; border: 1px solid #c4c4c4; border-radius: 6px; overflow: hidden; }
.crumbs button { display: flex; align-items: center; justify-content: center; gap: 4px; width: 25px; border-right: 1px solid #c4c4c4; }
.crumbs .c-user { width: 70px; }
.crumbs .c-desk { width: 98px; background: #d6d6d6; }
.crumbs .fwd { border: 0; background: #fafafa; color: #999; }
.listing { width: 100%; border-collapse: collapse; }
.listing th { height: 26px; padding: 0 7px 2px 6px; border: solid #f2f2f2; border-width: 1px 0 1px 1px; text-align: left; color: #929292; line-height: 18px; }
.listing .n { width: 100%; border-left: 0; }
.listing .m { padding-right: 6px; }
.n span { display: flex; justify-content: space-between; align-items: center; padding-right: 3px; }
.dlg-foot { height: 47px; flex: none; display: flex; align-items: center; padding: 12px 10px 0; border-top: 1px solid #c6c6c6; position: relative; }
.dlg-foot label { display: flex; align-items: center; gap: 4px; }
.formats { position: absolute; right: 5px; bottom: 1px; width: 467px; padding: 4px 0; list-style: none; background: #fafafa; border: 1px solid #a0a0a0; border-radius: 6px; box-shadow: 0 0 2px rgba(0, 0, 0, .2); }
.formats li { height: 29px; padding: 0 8px; line-height: 29px; white-space: nowrap; }
.formats .hover { background: #dedede; }
.pointer { position: absolute; right: 219px; bottom: -6px; }
```
